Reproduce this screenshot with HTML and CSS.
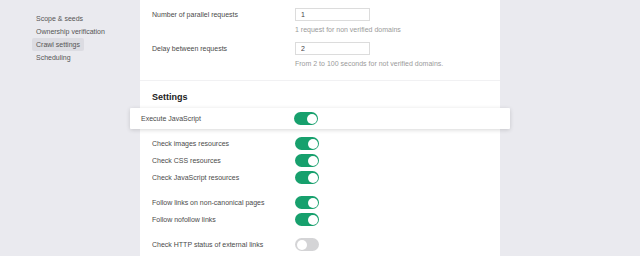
FILE: index.html
```html
<!DOCTYPE html>
<html lang="en">
<head>
  <meta charset="UTF-8">
  <title>Crawl settings</title>
  <link rel="stylesheet" href="styles.css">
</head>
<body>

  <div class="layout">
    <nav class="sidebar">
      <a class="nav-item">Scope &amp; seeds</a>
      <a class="nav-item">Ownership verification</a>
      <a class="nav-item active">Crawl settings</a>
      <a class="nav-item">Scheduling</a>
    </nav>

    <main class="panel">
      <div class="fields">
        <div class="field">
          <label>Number of parallel requests</label>
          <input type="text" value="1">
          <span class="hint">1 request for non verified domains</span>
        </div>
        <div class="field">
          <label>Delay between requests</label>
          <input type="text" value="2">
          <span class="hint">From 2 to 100 seconds for not verified domains.</span>
        </div>
      </div>

      <div class="settings">
        <h3>Settings</h3>

        <div class="row row-lifted">
          <span>Execute JavaScript</span>
          <span class="toggle on"></span>
        </div>

        <div class="group">
          <div class="row"><span>Check images resources</span><span class="toggle on"></span></div>
          <div class="row"><span>Check CSS resources</span><span class="toggle on"></span></div>
          <div class="row"><span>Check JavaScript resources</span><span class="toggle on"></span></div>
        </div>

        <div class="group">
          <div class="row"><span>Follow links on non-canonical pages</span><span class="toggle on"></span></div>
          <div class="row"><span>Follow nofollow links</span><span class="toggle on"></span></div>
        </div>

        <div class="group">
          <div class="row"><span>Check HTTP status of external links</span><span class="toggle"></span></div>
        </div>
      </div>
    </main>
  </div>

</body>
</html>
```

FILE: styles.css
```css
body {
  margin: 0;
  background-color: #eaeaef;
  font-family: "Liberation Sans", Arial, sans-serif;
  font-size: 7px;
  color: #4a4a4a;
  height: 256px;
  overflow: hidden;
}

.layout {
  display: flex;
  height: 256px;
}

.sidebar {
  width: 108px;
  padding: 12px 0 0 32px;
  display: flex;
  flex-direction: column;
  align-items: flex-start;
}

.nav-item {
  line-height: 13px;
  padding: 0 4px;
  color: #555;
  border-radius: 2px;
}

.nav-item.active {
  background-color: #dcdce2;
}

.panel {
  width: 360px;
  background-color: #fff;
}

.fields {
  padding: 8px 12px 11px;
  display: flex;
  flex-direction: column;
  gap: 7px;
}

.field {
  display: grid;
  grid-template-columns: 143px 75px;
  row-gap: 3px;
  align-items: center;
}

.field label {
  line-height: 13px;
}

.field input {
  box-sizing: border-box;
  height: 13px;
  width: 75px;
  border: 1px solid #dcdcdc;
  padding: 0 5px;
  font-family: inherit;
  font-size: 7px;
  color: #444;
  outline: none;
}

.hint {
  grid-column: 2;
  line-height: 11px;
  color: #9a9a9a;
  white-space: nowrap;
}

.settings {
  border-top: 1px solid #f1f1f3;
  padding: 10px 12px 0;
}

.settings h3 {
  margin: 0 0 5px;
  font-size: 9px;
  line-height: 12px;
  font-weight: bold;
  color: #222;
}

.row {
  display: grid;
  grid-template-columns: 143px 24px;
  align-items: center;
  height: 17px;
}

.row-lifted {
  height: 21px;
  margin: 0 -22px 6px;
  padding-left: 11px;
  grid-template-columns: 153px 24px;
  background-color: #fff;
  box-shadow: 0 1px 4px rgba(0, 0, 0, 0.16);
  border-radius: 1px;
  position: relative;
}

.group + .group {
  margin-top: 8px;
}

.toggle {
  width: 24px;
  height: 13px;
  border-radius: 7px;
  background-color: #d4d4d6;
  position: relative;
}

.toggle::after {
  content: "";
  position: absolute;
  top: 1.5px;
  left: 1.5px;
  width: 10px;
  height: 10px;
  border-radius: 50%;
  background-color: #fff;
}

.toggle.on {
  background-color: #17a06d;
}

.toggle.on::after {
  left: 12.5px;
}
```
